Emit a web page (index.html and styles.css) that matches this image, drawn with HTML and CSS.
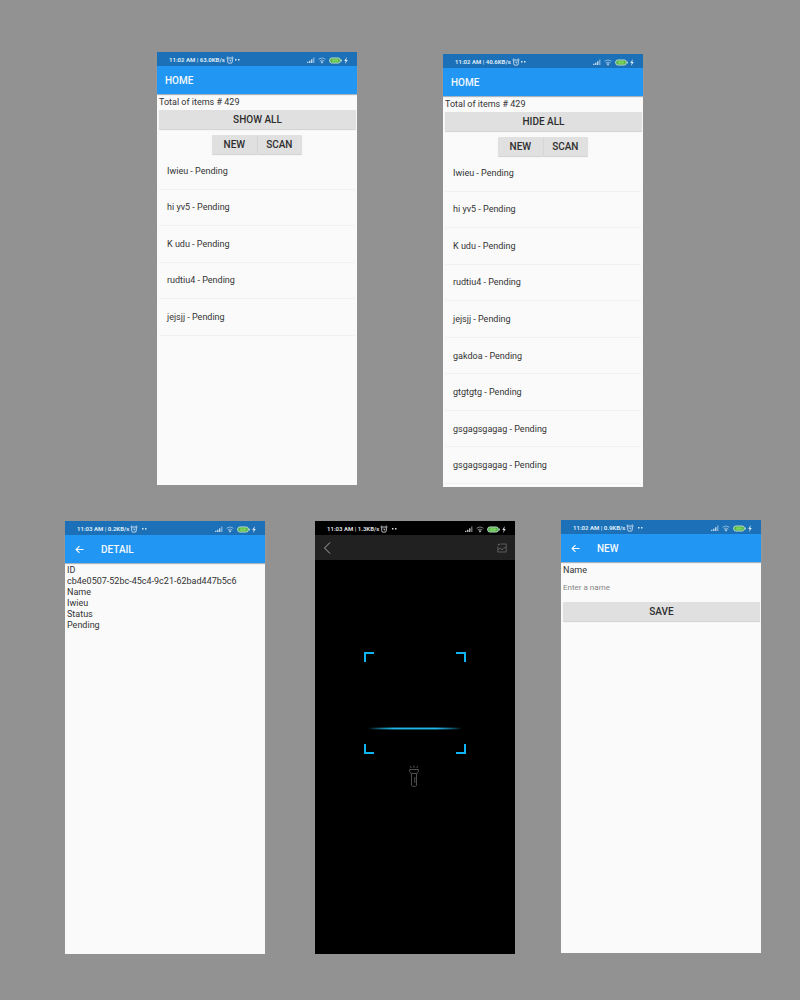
FILE: index.html
```html
<!DOCTYPE html>
<html lang="en">
<head>
<meta charset="utf-8">
<title>Item scanner screens</title>
<link rel="stylesheet" href="styles.css">
</head>
<body>
<svg class="sprite" aria-hidden="true">
  <symbol id="alarm" viewBox="0 0 14 14">
    <path d="M3 3.500h8v6.500q0 2.500-2.500 2.500h-3Q3 12.500 3 10zM.8 3.500L3.800 1M13.200 3.500L10.200 1M7 6v2.500h2" fill="none" stroke="currentColor" stroke-width="1.500"/>
  </symbol>
  <symbol id="dots" viewBox="0 0 5 2">
    <path d="M0 0h1.500v1.500H0zM3 0h1.500v1.500H3z" fill="currentColor"/>
  </symbol>
  <symbol id="signal" viewBox="0 0 16 12">
    <path d="M0 12v-2.500h3V12zM4 12V7.500h3V12zM8 12V4.500h3V12z" fill="currentColor"/>
    <path d="M12 12V1h3v11z" fill="currentColor" opacity=".6"/>
  </symbol>
  <symbol id="wifi" viewBox="0 0 16 14">
    <path d="M1 4.500q7-5.500 14 0M3.500 8q4.500-4 9 0" fill="none" stroke="currentColor" stroke-width="2" opacity=".7"/>
    <path d="M5 9.500q3-2 6 0l-3 4z" fill="currentColor"/>
  </symbol>
  <symbol id="battery" viewBox="0 0 26 14">
    <rect x="1.500" y="2" width="21" height="10" rx="4" fill="#49a545" stroke="#bfe3c8" stroke-width="2"/>
    <rect x="5" y="4.500" width="14" height="5" rx="2" fill="#7bd45c"/>
    <path d="M24.800 5v4" stroke="#bfe3c8" stroke-width="1.800"/>
  </symbol>
  <symbol id="bolt" viewBox="0 0 8 14">
    <path d="M5.500 0L.5 8H3.500L2 14 7.500 6H4.500z" fill="currentColor"/>
  </symbol>
  <symbol id="back" viewBox="0 0 10 10">
    <path d="M9.500 5H1.500M5 1.200L1.200 5 5 8.800" fill="none" stroke="currentColor" stroke-width="1.300"/>
  </symbol>
</svg>

<main class="board">
  <div class="row row-top">
    <section class="phone">
      <header class="status">
        <span class="clock">11:02 AM | 63.0KB/s</span><svg class="alarm"><use href="#alarm"/></svg><svg class="dots"><use href="#dots"/></svg>
        <span class="tray"><svg class="signal"><use href="#signal"/></svg><svg class="wifi"><use href="#wifi"/></svg><svg class="battery"><use href="#battery"/></svg><svg class="bolt"><use href="#bolt"/></svg></span>
      </header>
      <div class="appbar"><h1 class="title">HOME</h1></div>
      <div class="content">
        <p class="text">Total of items # 429</p>
        <button class="button wide" type="button">SHOW ALL</button>
        <div class="pair"><button class="button" type="button">NEW</button><button class="button" type="button">SCAN</button></div>
        <ul class="list">
          <li class="item">Iwieu - Pending</li>
          <li class="item">hi yv5 - Pending</li>
          <li class="item">K udu - Pending</li>
          <li class="item">rudtiu4 - Pending</li>
          <li class="item">jejsjj - Pending</li>
        </ul>
      </div>
    </section>

    <section class="phone phone-lower">
      <header class="status">
        <span class="clock">11:02 AM | 40.6KB/s</span><svg class="alarm"><use href="#alarm"/></svg><svg class="dots"><use href="#dots"/></svg>
        <span class="tray"><svg class="signal"><use href="#signal"/></svg><svg class="wifi"><use href="#wifi"/></svg><svg class="battery"><use href="#battery"/></svg><svg class="bolt"><use href="#bolt"/></svg></span>
      </header>
      <div class="appbar"><h1 class="title">HOME</h1></div>
      <div class="content">
        <p class="text">Total of items # 429</p>
        <button class="button wide" type="button">HIDE ALL</button>
        <div class="pair"><button class="button" type="button">NEW</button><button class="button" type="button">SCAN</button></div>
        <ul class="list">
          <li class="item">Iwieu - Pending</li>
          <li class="item">hi yv5 - Pending</li>
          <li class="item">K udu - Pending</li>
          <li class="item">rudtiu4 - Pending</li>
          <li class="item">jejsjj - Pending</li>
          <li class="item">gakdoa - Pending</li>
          <li class="item">gtgtgtg - Pending</li>
          <li class="item">gsgagsgagag - Pending</li>
          <li class="item">gsgagsgagag - Pending</li>
        </ul>
      </div>
    </section>
  </div>

  <div class="row row-bottom">
    <section class="phone phone-level">
      <header class="status">
        <span class="clock">11:03 AM | 0.2KB/s</span><svg class="alarm"><use href="#alarm"/></svg><svg class="dots spaced"><use href="#dots"/></svg>
        <span class="tray"><svg class="signal"><use href="#signal"/></svg><svg class="wifi"><use href="#wifi"/></svg><svg class="battery"><use href="#battery"/></svg><svg class="bolt"><use href="#bolt"/></svg></span>
      </header>
      <div class="appbar"><button class="back" type="button" aria-label="Back"><svg class="back-icon"><use href="#back"/></svg></button><h1 class="title">DETAIL</h1></div>
      <dl class="content detail">
        <dt>ID</dt><dd>cb4e0507-52bc-45c4-9c21-62bad447b5c6</dd>
        <dt>Name</dt><dd>Iwieu</dd>
        <dt>Status</dt><dd>Pending</dd>
      </dl>
    </section>

    <section class="phone phone-level phone-dark">
      <header class="status">
        <span class="clock">11:03 AM | 1.3KB/s</span><svg class="alarm"><use href="#alarm"/></svg><svg class="dots spaced"><use href="#dots"/></svg>
        <span class="tray"><svg class="signal"><use href="#signal"/></svg><svg class="wifi"><use href="#wifi"/></svg><svg class="battery"><use href="#battery"/></svg><svg class="bolt"><use href="#bolt"/></svg></span>
      </header>
      <div class="scanbar">
        <button class="scan-tool" type="button" aria-label="Back"><svg class="chevron" viewBox="0 0 8 12"><path d="M7 .5L1.500 6 7 11.500" fill="none" stroke="#aaa" stroke-width="1"/></svg></button>
        <button class="scan-tool" type="button" aria-label="Choose picture"><svg class="gallery" viewBox="0 0 10 10"><path d="M3.500 1h5.700v8H.8V3.500M1 6.500L3.500 5 5 7l2-2.500L9 5M.8 1.500h2M1.800.5v2" fill="none" stroke="#747474" stroke-width=".7"/></svg></button>
      </div>
      <div class="viewer">
        <svg class="frame" viewBox="0 0 102 102">
          <defs>
            <linearGradient id="beam"><stop offset="0" stop-color="#20b8ea" stop-opacity="0"/><stop offset=".28" stop-color="#20b8ea"/><stop offset=".72" stop-color="#20b8ea"/><stop offset="1" stop-color="#20b8ea" stop-opacity="0"/></linearGradient>
          </defs>
          <path d="M1 10V1h9M92 1h9v9M101 92v9h-9M10 101H1v-9" fill="none" stroke="#10b4f0" stroke-width="2"/>
          <rect x="4" y="75" width="94" height="3" fill="url(#beam)" opacity=".45"/>
          <rect x="4" y="76" width="94" height="1" fill="url(#beam)"/>
        </svg>
        <button class="torch" type="button" aria-label="Torch"><svg class="torch-icon" viewBox="0 0 10 22"><path d="M.7 4.500h8.600v2L7.500 9v11.500l-1 .8h-3l-1-.8V9L.7 6.500zM2.500 8.500h5M5.800 12v6M5 3V.5M2.500 3L1 1M7.500 3L9 1" fill="none" stroke="#626262" stroke-width=".8"/></svg></button>
      </div>
    </section>

    <section class="phone">
      <header class="status">
        <span class="clock">11:02 AM | 0.9KB/s</span><svg class="alarm"><use href="#alarm"/></svg><svg class="dots spaced"><use href="#dots"/></svg>
        <span class="tray"><svg class="signal"><use href="#signal"/></svg><svg class="wifi"><use href="#wifi"/></svg><svg class="battery"><use href="#battery"/></svg><svg class="bolt"><use href="#bolt"/></svg></span>
      </header>
      <div class="appbar"><button class="back" type="button" aria-label="Back"><svg class="back-icon"><use href="#back"/></svg></button><h1 class="title">NEW</h1></div>
      <form class="content">
        <label class="text" for="name">Name</label>
        <input class="field" id="name" type="text" placeholder="Enter a name">
        <button class="button wide save" type="button">SAVE</button>
      </form>
    </section>
  </div>
</main>
</body>
</html>
```
FILE: styles.css
```css
* { box-sizing: border-box; }

body {
  margin: 0;
  background: #929292;
  color: #333;
  font: 9px/14px Roboto, sans-serif;
}

h1, p, ul, dl, dd { margin: 0; padding: 0; }
button, input { font: inherit; border: 0; margin: 0; padding: 0; background: none; }

.sprite { position: absolute; width: 0; height: 0; }

.board {
  display: flex;
  flex-direction: column;
  gap: 33px;
  min-height: 100vh;
  padding: 52px 0 44px;
}

.row { display: flex; align-items: flex-start; }
.row-top { justify-content: center; gap: 86px; }
.row-bottom { justify-content: space-between; padding: 0 39px 0 65px; }

.phone {
  display: flex;
  flex-direction: column;
  width: 25vw;
  aspect-ratio: 200 / 433;
  background: #fafafa;
}
.phone-lower { margin-top: 2px; }
.phone-level { margin-top: 1px; }
.phone-dark { background: #000; margin-left: 4px; }

.status {
  display: flex;
  align-items: center;
  height: 14px;
  padding: 2px 9px 0 12px;
  background: #1b70b8;
  color: #dceaf6;
  font-size: 6px;
  line-height: 8px;
  font-weight: 700;
}
.phone-dark .status { background: #000; color: #ddd; }
.alarm { width: 8px; height: 8px; margin-left: 1px; }
.dots { width: 5px; height: 2px; margin-left: 1px; }
.spaced { margin-left: 4px; }
.tray { display: flex; align-items: center; margin-left: auto; }
.signal { width: 8px; height: 6px; margin-right: 3px; opacity: .8; }
.wifi { width: 8px; height: 7px; margin-right: 3px; opacity: .8; }
.battery { width: 13px; height: 7px; margin-right: 2px; }
.bolt { width: 4px; height: 7px; }

.appbar {
  display: flex;
  align-items: center;
  gap: 17px;
  height: 28px;
  padding: 0 8px;
  background: #2196f3;
  color: #f4f9fd;
  box-shadow: 0 1px 1px #a8b4be;
}
.title { padding-top: 2px; font-size: 10px; line-height: 14px; font-weight: 500; }
.back { display: flex; margin-left: 2px; color: inherit; }
.back-icon { width: 9px; height: 9px; }

.content { display: flex; flex: 1; flex-direction: column; padding-top: 1px; }
.text { padding: 0 2px; }

.button {
  height: 19px;
  padding: 0 12px;
  border-radius: 1px;
  background: #e0e0e0;
  color: #2e2e2e;
  font-size: 10px;
  line-height: 19px;
  font-weight: 500;
  box-shadow: 0 1px 1px #d0d0d0;
}
.wide { margin: 1px 1px 0 2px; }
.pair { display: flex; justify-content: center; padding-top: 6px; }
.pair .button + .button { border-left: 1px solid #d6d6d6; padding: 0 10px 0 8px; }

.list {
  display: grid;
  flex: 1;
  grid-template-rows: repeat(9, 1fr);
  margin: -1px 2px 0;
  padding-bottom: 3px;
  list-style: none;
}
.item {
  display: flex;
  align-items: center;
  padding-left: 8px;
  border-bottom: 1px solid #f1f1f1;
}

.detail { display: block; padding: 2px 2px 0; line-height: 11px; }

.field { height: 20px; padding: 0 2px; font-size: 8px; color: #333; }
.field::placeholder { color: #858585; opacity: 1; }
.save { margin-top: 5px; }

.scanbar {
  display: flex;
  align-items: center;
  justify-content: space-between;
  height: 25px;
  padding: 0 8px;
  background: #212121;
}
.scan-tool { display: flex; }
.chevron { width: 8px; height: 12px; }
.gallery { width: 10px; height: 10px; }

.viewer {
  display: flex;
  flex: 1;
  flex-direction: column;
  align-items: center;
  padding-top: 92px;
}
.frame { width: 51%; }
.torch { display: flex; margin: 11px 2px 0 0; }
.torch-icon { width: 10px; height: 22px; }
```
